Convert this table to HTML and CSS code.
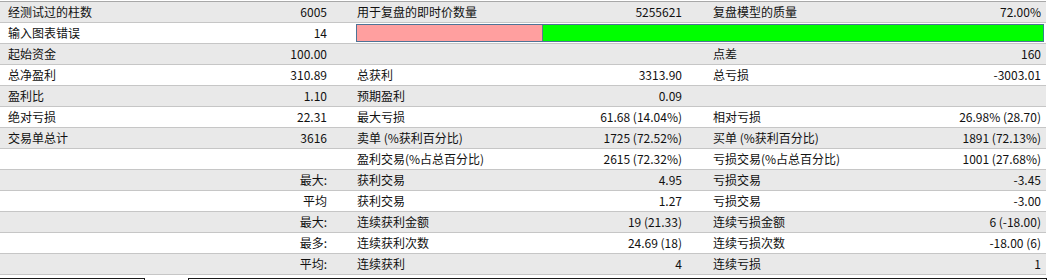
FILE: index.html
```html
<!DOCTYPE html>
<html lang="zh">
<head>
<meta charset="utf-8">
<link rel="stylesheet" href="styles.css">
</head>
<body>
<div class="report">
  <div class="row alt">
    <div class="cell a"><span>经测试过的柱数</span><span>6005</span></div>
    <div class="cell b"><span>用于复盘的即时价数量</span><span>5255621</span></div>
    <div class="cell c"><span>复盘模型的质量</span><span>72.00%</span></div>
  </div>
  <div class="row">
    <div class="cell a"><span>输入图表错误</span><span>14</span></div>
    <div class="cell bc">
      <div class="bar"><div class="bad" style="width:27%"></div><div class="good"></div></div>
    </div>
  </div>
  <div class="row alt">
    <div class="cell a"><span>起始资金</span><span>100.00</span></div>
    <div class="cell b"></div>
    <div class="cell c"><span>点差</span><span>160</span></div>
  </div>
  <div class="row">
    <div class="cell a"><span>总净盈利</span><span>310.89</span></div>
    <div class="cell b"><span>总获利</span><span>3313.90</span></div>
    <div class="cell c"><span>总亏损</span><span>-3003.01</span></div>
  </div>
  <div class="row alt">
    <div class="cell a"><span>盈利比</span><span>1.10</span></div>
    <div class="cell b"><span>预期盈利</span><span>0.09</span></div>
    <div class="cell c"></div>
  </div>
  <div class="row">
    <div class="cell a"><span>绝对亏损</span><span>22.31</span></div>
    <div class="cell b"><span>最大亏损</span><span>61.68 (14.04%)</span></div>
    <div class="cell c"><span>相对亏损</span><span>26.98% (28.70)</span></div>
  </div>
  <div class="row alt">
    <div class="cell a"><span>交易单总计</span><span>3616</span></div>
    <div class="cell b"><span>卖单 (%获利百分比)</span><span>1725 (72.52%)</span></div>
    <div class="cell c"><span>买单 (%获利百分比)</span><span>1891 (72.13%)</span></div>
  </div>
  <div class="row">
    <div class="cell a"></div>
    <div class="cell b"><span>盈利交易(%占总百分比)</span><span>2615 (72.32%)</span></div>
    <div class="cell c"><span>亏损交易(%占总百分比)</span><span>1001 (27.68%)</span></div>
  </div>
  <div class="row alt">
    <div class="cell a right"><span>最大:</span></div>
    <div class="cell b"><span>获利交易</span><span>4.95</span></div>
    <div class="cell c"><span>亏损交易</span><span>-3.45</span></div>
  </div>
  <div class="row">
    <div class="cell a right"><span>平均</span></div>
    <div class="cell b"><span>获利交易</span><span>1.27</span></div>
    <div class="cell c"><span>亏损交易</span><span>-3.00</span></div>
  </div>
  <div class="row alt">
    <div class="cell a right"><span>最大:</span></div>
    <div class="cell b"><span>连续获利金额</span><span>19 (21.33)</span></div>
    <div class="cell c"><span>连续亏损金额</span><span>6 (-18.00)</span></div>
  </div>
  <div class="row">
    <div class="cell a right"><span>最多:</span></div>
    <div class="cell b"><span>连续获利次数</span><span>24.69 (18)</span></div>
    <div class="cell c"><span>连续亏损次数</span><span>-18.00 (6)</span></div>
  </div>
  <div class="row alt">
    <div class="cell a right"><span>平均:</span></div>
    <div class="cell b"><span>连续获利</span><span>4</span></div>
    <div class="cell c"><span>连续亏损</span><span>1</span></div>
  </div>
</div>
<div class="footer">
  <div class="box small"></div>
  <div class="box wide"></div>
</div>
</body>
</html>
```
FILE: styles.css
```css
html, body {
  margin: 0;
  padding: 0;
  background: #ffffff;
  overflow: hidden;
}
body {
  width: 1049px;
  height: 280px;
  font-family: "Noto Sans CJK SC", "Microsoft YaHei", sans-serif;
  font-size: 12px;
  color: #111111;
}
.report {
  width: 1046px;
  padding-top: 1px;
}
.report .row:first-child {
  border-top: 1px solid #a8a8a8;
}
.row {
  display: grid;
  grid-template-columns: 340px 357px 349px;
  height: 20px;
  border-bottom: 1px solid #c6c6c6;
  background: #ffffff;
}
.row.alt {
  background: #e9e9e9;
}
.cell {
  display: flex;
  justify-content: space-between;
  align-items: center;
  white-space: nowrap;
  line-height: 20px;
}
.cell.a {
  padding: 0 13px 0 8px;
}
.cell.b {
  padding: 0 15px 0 17px;
}
.cell.c {
  padding: 0 5px 0 16px;
}
.cell.right {
  justify-content: flex-end;
}
.cell.bc {
  grid-column: 2 / 4;
  padding: 1px 2px 1px 16px;
  align-items: stretch;
}
.bar {
  flex: 1;
  display: flex;
  height: 18px;
  box-sizing: border-box;
  border: 1px solid #4e7396;
  border-right-color: #2e8a86;
}
.bad {
  background: #ff9f9f;
  border-right: 1px solid #5a7890;
}
.good {
  flex: 1;
  background: #00ff00;
}
.footer {
  display: flex;
  gap: 43px;
  margin-top: 3px;
}
.box {
  height: 2px;
  border: 1px solid #1a1a1a;
  border-bottom: none;
  background: #ffffff;
}
.box.small {
  width: 144px;
  border-left: none;
}
.box.wide {
  width: 857px;
}
```
